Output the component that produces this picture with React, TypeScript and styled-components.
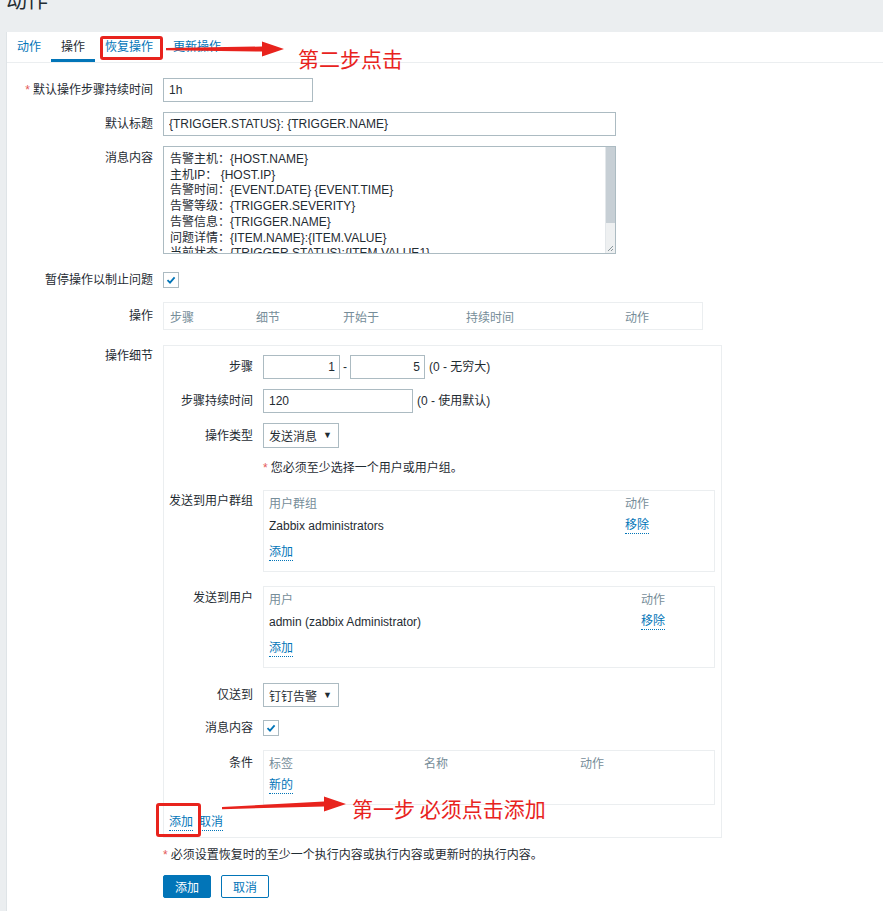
import React from "react";
import styled, { createGlobalStyle } from "styled-components";

const BLUE = "#0275b8";
const TEXT = "#1f2c33";
const MUTED = "#768d99";
const LINE = "#ebeef0";
const INPUT_BORDER = "#acbbc2";
const RED = "#e8231d";

const tabs = [
  { title: "动作", active: false },
  { title: "操作", active: true },
  { title: "恢复操作", active: false },
  { title: "更新操作", active: false },
];

const messageLines = [
  "告警主机：{HOST.NAME}",
  "主机IP： {HOST.IP}",
  "告警时间：{EVENT.DATE} {EVENT.TIME}",
  "告警等级：{TRIGGER.SEVERITY}",
  "告警信息：{TRIGGER.NAME}",
  "问题详情：{ITEM.NAME}:{ITEM.VALUE}",
  "当前状态：{TRIGGER.STATUS}:{ITEM.VALUE1}",
  "事件ID：{EVENT.ID}",
  "",
];

const operationColumns = ["步骤", "细节", "开始于", "持续时间", "动作"];

const GlobalStyle = createGlobalStyle`
  html, body {
    margin: 0;
    padding: 0;
    background: ${LINE};
  }
  body {
    font-family: "Liberation Sans", Arial, "Noto Sans CJK SC", sans-serif;
    font-size: 12px;
    color: ${TEXT};
  }
  * { box-sizing: border-box; }
`;

const Root = styled.div`
  position: relative;
  width: 883px;
  min-height: 911px;
  overflow: hidden;
  padding-left: 6px;
`;

const Header = styled.header`
  height: 32px;
  display: flex;
  align-items: flex-end;
  padding-bottom: 22px;
  overflow: hidden;
`;

const Title = styled.h1`
  margin: 0;
  font-size: 21px;
  line-height: 20px;
  font-weight: normal;
  color: ${TEXT};
`;

const Panel = styled.main`
  background: #fff;
  border-left: 1px solid #dfe4e7;
  margin-right: -1px;
  min-height: 879px;
`;

const TabList = styled.nav`
  display: flex;
  height: 31px;
  border-bottom: 1px solid ${LINE};
`;

const Tab = styled.span<{ $active?: boolean }>`
  position: relative;
  padding: 0 10px;
  line-height: 30px;
  color: ${(p) => (p.$active ? TEXT : BLUE)};

  &::after {
    content: "";
    display: ${(p) => (p.$active ? "block" : "none")};
    position: absolute;
    left: 0;
    right: 0;
    bottom: 0;
    height: 3px;
    background: ${BLUE};
  }
`;

const Form = styled.form`
  display: flex;
  flex-direction: column;
  padding-top: 15px;
`;

const Row = styled.div<{ $mt?: number; $label?: number; $center?: boolean }>`
  display: grid;
  grid-template-columns: ${(p) => p.$label ?? 146}px auto;
  column-gap: 10px;
  align-items: ${(p) => (p.$center ? "center" : "start")};
  margin-top: ${(p) => p.$mt ?? 0}px;
`;

const Label = styled.label<{ $pt?: number }>`
  text-align: right;
  line-height: 16px;
  padding-top: ${(p) => p.$pt ?? 4}px;
  white-space: nowrap;
`;

const Asterisk = styled.span`
  color: #e45959;
  margin-right: 3px;
`;

const Controls = styled.div`
  display: flex;
  align-items: center;
`;

const TextInput = styled.input<{ $w: number; $right?: boolean }>`
  width: ${(p) => p.$w}px;
  height: 24px;
  border: 1px solid ${INPUT_BORDER};
  padding: 0 ${(p) => (p.$right ? 4 : 5)}px 0 5px;
  font: inherit;
  color: ${TEXT};
  text-align: ${(p) => (p.$right ? "right" : "left")};
  outline: none;
`;

const TextAreaWrap = styled.div`
  position: relative;
  width: 453px;
  height: 108px;
`;

const TextArea = styled.textarea`
  display: block;
  width: 100%;
  height: 100%;
  border: 1px solid ${INPUT_BORDER};
  padding: 5px 16px 5px 6px;
  font: inherit;
  line-height: 15.7px;
  color: ${TEXT};
  resize: none;
  overflow: hidden;
  outline: none;
`;

/* scrollbar drawn by hand: the headless browser hides real ones */
const ScrollTrack = styled.div`
  position: absolute;
  top: 1px;
  right: 1px;
  bottom: 1px;
  width: 10px;
  background: #eef0f1;
  border-left: 1px solid #e3e7ea;
`;

const ScrollThumb = styled.div`
  height: 76px;
  background: #c7cfd5;
`;

const Resizer = styled.svg`
  position: absolute;
  right: 2px;
  bottom: 2px;
`;

const Hint = styled.span`
  margin-left: 4px;
  line-height: 16px;
`;

const Dash = styled.span`
  margin: 0 3px 0 3px;
`;

const SelectBox = styled.button<{ $h?: number }>`
  display: inline-flex;
  align-items: center;
  gap: 6px;
  height: ${(p) => p.$h ?? 24}px;
  padding: 0 6px 0 5px;
  border: 1px solid ${INPUT_BORDER};
  background: #fff;
  font: inherit;
  color: ${TEXT};
`;

const Caret = styled.span`
  font-size: 9px;
  line-height: 1;
`;

const Check = styled.span`
  display: inline-flex;
  align-items: center;
  justify-content: center;
  width: 16px;
  height: 16px;
  border: 1px solid ${INPUT_BORDER};
  background: #fff;
`;

const Note = styled.div`
  line-height: 16px;
`;

const Box = styled.div<{ $w: number }>`
  width: ${(p) => p.$w}px;
  border: 1px solid ${LINE};
`;

const OperationsBox = styled(Box)`
  display: grid;
  grid-template-columns: 86px 87px 123px 159px auto;
  align-items: center;
  height: 28px;
  padding: 0 6px;
  color: ${MUTED};
`;

const DetailsBox = styled(Box)`
  padding: 9px 6px 6px 5px;
`;

const SubTable = styled(Box)`
  padding: 5px 5px 10px;
`;

const SubRow = styled.div<{ $cols: string; $mt?: number; $muted?: boolean }>`
  display: grid;
  grid-template-columns: ${(p) => p.$cols};
  line-height: 16px;
  margin-top: ${(p) => p.$mt ?? 0}px;
  color: ${(p) => (p.$muted ? MUTED : TEXT)};
`;

const DotLink = styled.a`
  justify-self: start;
  color: ${BLUE};
  text-decoration: none;
  border-bottom: 1px dotted ${BLUE};
  line-height: 15px;
  cursor: pointer;
`;

const LinkRow = styled.div<{ $mt?: number }>`
  display: flex;
  gap: 6px;
  line-height: 16px;
  margin-top: ${(p) => p.$mt ?? 0}px;
`;

const ButtonRow = styled.div`
  display: flex;
  gap: 10px;
`;

const Button = styled.button<{ $primary?: boolean }>`
  height: 23px;
  padding: 0 11px;
  border: 1px solid ${BLUE};
  border-radius: 2px;
  background: ${(p) => (p.$primary ? BLUE : "#fff")};
  color: ${(p) => (p.$primary ? "#fff" : BLUE)};
  font: inherit;
`;

/* red annotations drawn over the screenshot */
const Marker = styled.div<{ $x: number; $y: number; $w: number; $h: number }>`
  position: absolute;
  left: ${(p) => p.$x}px;
  top: ${(p) => p.$y}px;
  width: ${(p) => p.$w}px;
  height: ${(p) => p.$h}px;
  border: 3px solid ${RED};
  border-radius: 3px;
  pointer-events: none;
`;

const Callout = styled.div<{ $x: number; $y: number }>`
  position: absolute;
  left: ${(p) => p.$x}px;
  top: ${(p) => p.$y}px;
  color: ${RED};
  font-family: "Noto Sans CJK SC", sans-serif;
  font-size: 21px;
  line-height: 26px;
  white-space: nowrap;
`;

const ArrowSvg = styled.svg<{ $x: number; $y: number }>`
  position: absolute;
  left: ${(p) => p.$x}px;
  top: ${(p) => p.$y}px;
`;

function Arrow({ x, y, w, rise = 0 }: { x: number; y: number; w: number; rise?: number }) {
  const head = w - 22;
  const tail = 9 + rise;
  return (
    <ArrowSvg $x={x} $y={y} width={w} height={18 + rise} viewBox={`0 0 ${w} ${18 + rise}`}>
      <path
        d={`M0 ${tail - 1} L${head} 6.5 L${head} 1.5 L${w} 9 L${head} 16.5 L${head} 11.5 L0 ${tail + 1.2} Z`}
        fill={RED}
      />
    </ArrowSvg>
  );
}

function CheckBox() {
  return (
    <Check>
      <svg width="10" height="10" viewBox="0 0 10 10">
        <polyline points="1.5,5.2 4,7.6 8.6,2.4" fill="none" stroke={BLUE} strokeWidth="1.8" />
      </svg>
    </Check>
  );
}

function Select({ value, h }: { value: string; h?: number }) {
  return (
    <SelectBox type="button" $h={h}>
      {value}
      <Caret>▼</Caret>
    </SelectBox>
  );
}

export default function App() {
  return (
    <Root>
      <GlobalStyle />
      <Header>
        <Title>动作</Title>
      </Header>

      <Panel>
        <TabList>
          {tabs.map(({ title, active }) => (
            <Tab key={title} $active={active}>
              {title}
            </Tab>
          ))}
        </TabList>

        <Form onSubmit={(e) => e.preventDefault()}>
          <Row>
            <Label>
              <Asterisk>*</Asterisk>默认操作步骤持续时间
            </Label>
            <TextInput $w={150} defaultValue="1h" />
          </Row>

          <Row $mt={10}>
            <Label>默认标题</Label>
            <TextInput $w={453} defaultValue="{TRIGGER.STATUS}: {TRIGGER.NAME}" />
          </Row>

          <Row $mt={10}>
            <Label>消息内容</Label>
            <TextAreaWrap>
              <TextArea readOnly value={messageLines.join("\n")} />
              <ScrollTrack>
                <ScrollThumb />
              </ScrollTrack>
              <Resizer width="7" height="7" viewBox="0 0 7 7">
                <path d="M1 6 L6 1 M4 6 L6 4" stroke="#8a969c" strokeWidth="1" />
              </Resizer>
            </TextAreaWrap>
          </Row>

          <Row $mt={18} $center>
            <Label $pt={0}>暂停操作以制止问题</Label>
            <Controls>
              <CheckBox />
            </Controls>
          </Row>

          <Row $mt={14}>
            <Label $pt={6}>操作</Label>
            <OperationsBox $w={540}>
              {operationColumns.map((c) => (
                <span key={c}>{c}</span>
              ))}
            </OperationsBox>
          </Row>

          <Row $mt={15}>
            <Label $pt={3}>操作细节</Label>
            <DetailsBox $w={559}>
              <Row $label={84}>
                <Label>步骤</Label>
                <Controls>
                  <TextInput $w={77} $right defaultValue="1" />
                  <Dash>-</Dash>
                  <TextInput $w={75} $right defaultValue="5" />
                  <Hint>(0 - 无穷大)</Hint>
                </Controls>
              </Row>

              <Row $label={84} $mt={10}>
                <Label>步骤持续时间</Label>
                <Controls>
                  <TextInput $w={150} defaultValue="120" />
                  <Hint>(0 - 使用默认)</Hint>
                </Controls>
              </Row>

              <Row $label={84} $mt={10}>
                <Label $pt={5}>操作类型</Label>
                <Controls>
                  <Select value="发送消息" h={25} />
                </Controls>
              </Row>

              <Row $label={84} $mt={12}>
                <span />
                <Note>
                  <Asterisk>*</Asterisk>您必须至少选择一个用户或用户组。
                </Note>
              </Row>

              <Row $label={84} $mt={14}>
                <Label $pt={3}>发送到用户群组</Label>
                <SubTable $w={452}>
                  <SubRow $cols="356px auto" $muted>
                    <span>用户群组</span>
                    <span>动作</span>
                  </SubRow>
                  <SubRow $cols="356px auto" $mt={6}>
                    <span>Zabbix administrators</span>
                    <DotLink>移除</DotLink>
                  </SubRow>
                  <LinkRow $mt={11}>
                    <DotLink>添加</DotLink>
                  </LinkRow>
                </SubTable>
              </Row>

              <Row $label={84} $mt={14}>
                <Label $pt={4}>发送到用户</Label>
                <SubTable $w={452}>
                  <SubRow $cols="372px auto" $muted>
                    <span>用户</span>
                    <span>动作</span>
                  </SubRow>
                  <SubRow $cols="372px auto" $mt={6}>
                    <span>admin (zabbix Administrator)</span>
                    <DotLink>移除</DotLink>
                  </SubRow>
                  <LinkRow $mt={11}>
                    <DotLink>添加</DotLink>
                  </LinkRow>
                </SubTable>
              </Row>

              <Row $label={84} $mt={15}>
                <Label>仅送到</Label>
                <Controls>
                  <Select value="钉钉告警" />
                </Controls>
              </Row>

              <Row $label={84} $mt={13} $center>
                <Label $pt={0}>消息内容</Label>
                <Controls>
                  <CheckBox />
                </Controls>
              </Row>

              <Row $label={84} $mt={14}>
                <Label $pt={5}>条件</Label>
                <SubTable $w={452}>
                  <SubRow $cols="155px 156px auto" $muted>
                    <span>标签</span>
                    <span>名称</span>
                    <span>动作</span>
                  </SubRow>
                  <LinkRow $mt={6}>
                    <DotLink>新的</DotLink>
                  </LinkRow>
                </SubTable>
              </Row>

              <LinkRow $mt={10}>
                <DotLink>添加</DotLink>
                <DotLink>取消</DotLink>
              </LinkRow>
            </DetailsBox>
          </Row>

          <Row $mt={9}>
            <span />
            <Note>
              <Asterisk>*</Asterisk>必须设置恢复时的至少一个执行内容或执行内容或更新时的执行内容。
            </Note>
          </Row>

          <Row $mt={12}>
            <span />
            <ButtonRow>
              <Button type="button" $primary>
                添加
              </Button>
              <Button type="button">取消</Button>
            </ButtonRow>
          </Row>
        </Form>
      </Panel>

      <Marker $x={100} $y={36} $w={63} $h={24} />
      <Arrow x={166} y={40} w={118} />
      <Callout $x={298} $y={45}>第二步点击</Callout>

      <Marker $x={156} $y={803} $w={45} $h={34} />
      <Arrow x={222} y={795} w={124} rise={4} />
      <Callout $x={352} $y={795}>第一步 必须点击添加</Callout>
    </Root>
  );
}
